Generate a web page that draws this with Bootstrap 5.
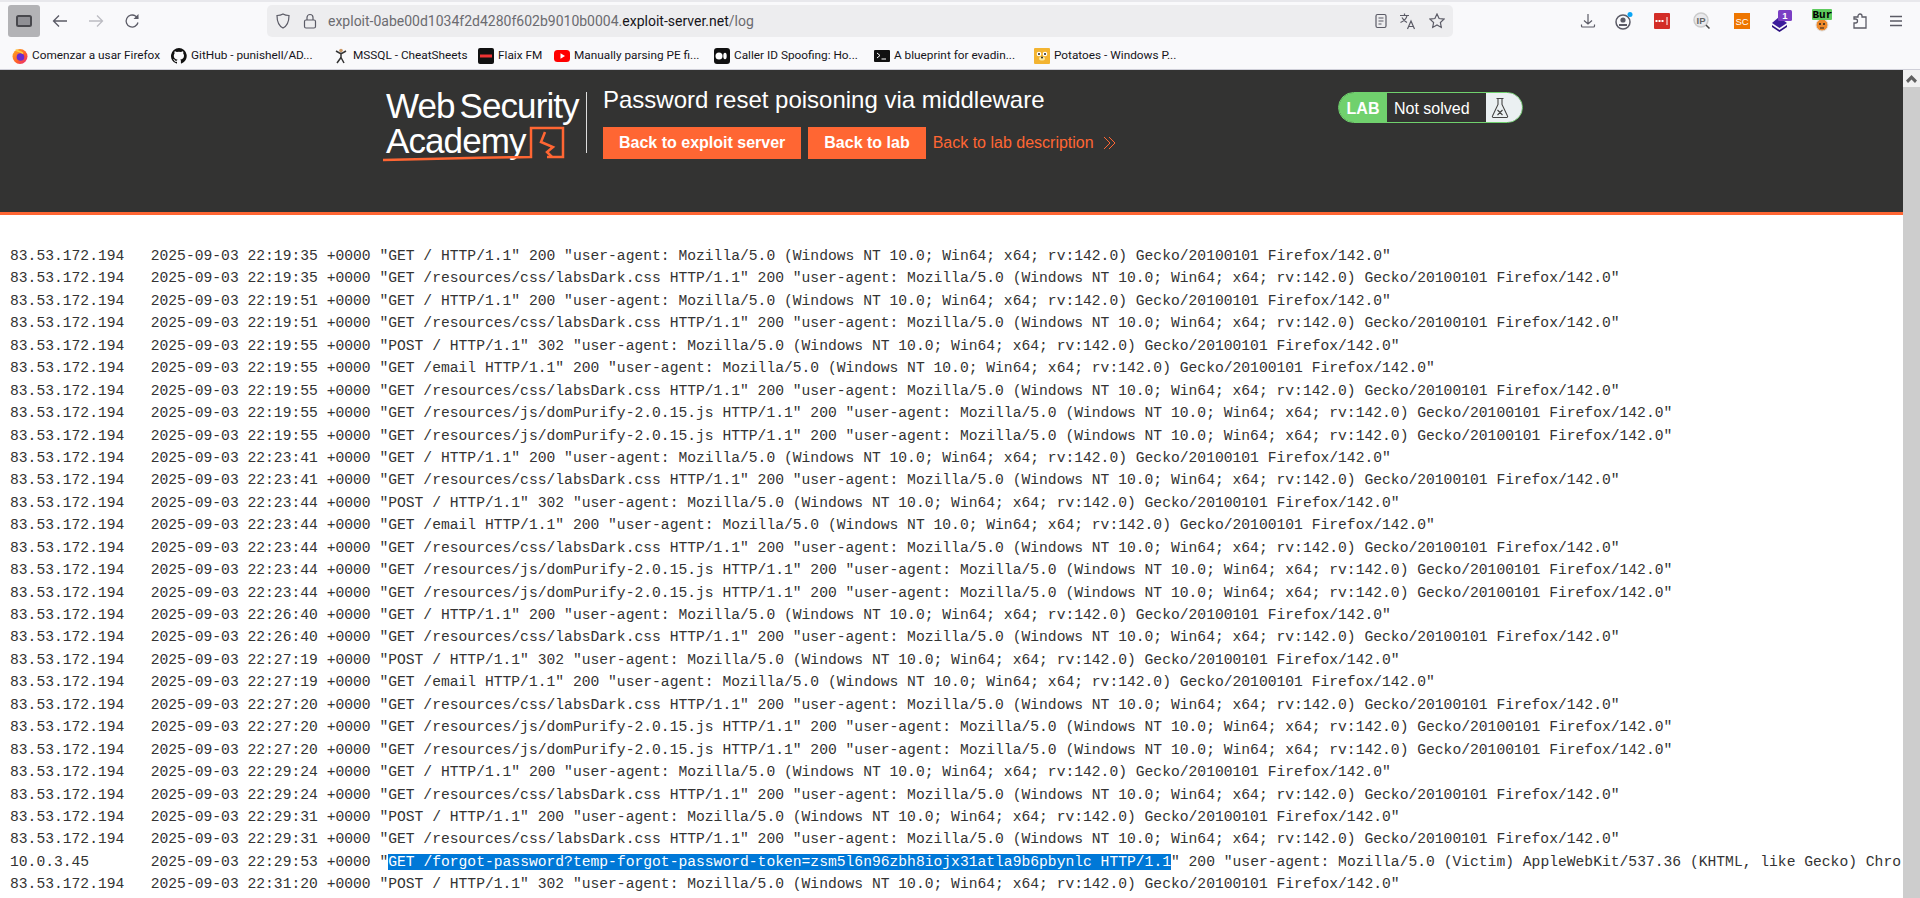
<!DOCTYPE html>
<html lang="en"><head><meta charset="utf-8"><title>log</title>
<link href="https://cdn.jsdelivr.net/npm/bootstrap@5.3.0/dist/css/bootstrap.min.css" rel="stylesheet">
<style>
html,body{height:898px;overflow:hidden;background:#fff}
body{font-family:"Liberation Sans",Arial,sans-serif;color:#222}
.chrome{background:#f9f9fb;height:70px;border-top:2px solid #e8e8ec;border-bottom:1px solid #cfcfd8}
.bar-a{height:35px;padding:3px 6px 0 8px}
.sidebtn{width:32px;height:32px;background:#b3b3b6;border-radius:3px}
.navic{width:36px}
.navfirst{margin-left:2px}
.urlbox{width:1186px;height:32px;margin-left:117px;background:#ededef;border-radius:5px;padding:0 8px;font-family:Roboto,sans-serif;font-size:14px}
.urlbox .dim{color:#6b6b70}
.urlbox .dk{color:#15141a}
.gap-lock{margin-left:11px}
.gap-url{margin-left:10px}
.gap-tr{margin-right:10px}
.gap-st{margin-right:12px}
.slot{width:40px;display:flex;justify-content:center}
.slotn{width:36px;display:flex;justify-content:center}
.bar-b{height:27px;margin-top:5px;font-family:Roboto,sans-serif;font-size:11.8px;color:#15141a;padding-left:12px;white-space:nowrap}
.bmk{display:flex;align-items:center;gap:4px;flex:none}
.bk-a{width:159px}.bk-b{width:162px}.bk-c{width:145px}.bk-d{width:76px}.bk-e{width:160px}
.ic{flex:none;display:block}
.main{height:828px}
.colpage{width:1903px;overflow:hidden}
.scrollz{width:17px;background:#cdcdcd}
.scrolltop{height:17px;background:#f1f1f1;display:flex;align-items:center;justify-content:center}
.acad{background:#333332;height:145px;border-bottom:3px solid #ff6633;position:relative}
.acadin{padding-left:386px;padding-top:15px}
.logowrap{width:200px;color:#fff;position:relative;padding-top:3px}
.lgt{font-size:35px;line-height:35px;letter-spacing:-.9px;word-spacing:-4px;white-space:nowrap}
.logomark{position:absolute;left:-5px;top:35px}
.vline{width:1px;height:61px;background:#ddd;margin:7px 16px 0 0}
.ttl{font-size:24px;color:#fff;line-height:29px;margin-bottom:13px;white-space:nowrap}
.orgbtn{background:#ff6633;color:#fff;font-weight:700;font-size:16px;height:32px;padding:0 16px;line-height:32px;margin-right:7px;white-space:nowrap}
.orglink{color:#ff6633;font-size:16px;white-space:nowrap}
.pill{position:absolute;left:1338px;top:22px;width:185px;height:31px;border-radius:16px;border:1px solid #70d16d;display:flex;overflow:hidden;font-size:16px;color:#fff}
.pl{background:#70d16d;width:48px;font-weight:700;text-align:center;line-height:31px}
.pm{width:99px;padding-left:7px;line-height:31px}
.pr{flex:1;background:#ebf0f2;display:flex;align-items:center;padding-left:5px}
.logbox{padding:30px 0 0 10px;font-family:"Liberation Mono",monospace;font-size:14.67px;line-height:22.43px;color:#333}
.logln{white-space:pre}
.sel{background:#0078d7;color:#fff}
</style></head><body>
<div class="chrome">
 <div class="bar-a d-flex align-items-center">
  <div class="sidebtn d-flex align-items-center justify-content-center"><svg class="ic" width="16" height="12" viewBox="0 0 16 12"><rect x="1" y="1" width="14" height="10" rx="1.5" fill="#8f8f94" stroke="#48484d" stroke-width="2"/></svg></div>
  <div class="navic navfirst d-flex justify-content-center"><svg class="ic" width="16" height="16" viewBox="0 0 16 16" fill="none" stroke="#5b5b66" stroke-width="1.3"><path d="M15 8H1.500M7 2.500 1.500 8 7 13.500"/></svg></div>
  <div class="navic d-flex justify-content-center"><svg class="ic" width="16" height="16" viewBox="0 0 16 16" fill="none" stroke="#bcbcc2" stroke-width="1.3"><path d="M1 8h13.500M9 2.500 14.500 8 9 13.500"/></svg></div>
  <div class="navic d-flex justify-content-center"><svg class="ic" width="16" height="16" viewBox="0 0 16 16" fill="none" stroke="#5b5b66" stroke-width="1.3"><path d="M14 9.500A6 6 0 1 1 11.500 3L14 5.500"/><path d="M14.500 1v5h-5z" fill="#5b5b66" stroke="none"/></svg></div>
  <div class="urlbox d-flex align-items-center">
   <svg class="ic" width="16" height="16" viewBox="0 0 16 16" fill="none" stroke="#5b5b66" stroke-width="1.2"><path d="M8 1c2 1.200 3.800 1.500 6 1.500 0 5.500-1 10-6 12.500C3 12.500 2 8 2 2.500 4.200 2.500 6 2.200 8 1z"/></svg>
   <svg class="ic gap-lock" width="16" height="16" viewBox="0 0 16 16" fill="none" stroke="#5b5b66" stroke-width="1.2"><rect x="2.500" y="7" width="11" height="8" rx="1.500"/><path d="M5 7V4.500a3 3 0 0 1 6 0V7"/></svg>
   <span class="gap-url"><span class="dim">exploit-0abe00d1034f2d4280f602b9010b0004.</span><span class="dk">exploit-server.net</span><span class="dim">/log</span></span>
   <div class="ms-auto d-flex align-items-center">
    <svg class="ic gap-tr" width="16" height="16" viewBox="0 0 16 16" fill="none" stroke="#5b5b66" stroke-width="1.200"><rect x="3" y="1.500" width="10" height="13" rx="1.500"/><path d="M5.500 5h5M5.500 8h5M5.500 11h3"/></svg>
    <svg class="ic gap-st" width="18" height="18" viewBox="0 0 18 18" fill="none" stroke="#5b5b66" stroke-width="1.200"><path d="M1 3.500h9M5.500 1.500v2M8 3.500c-.5 3-3 5.500-6.500 7M3 5.500c1 2 3 4 5 5M8.500 17l3.500-8 3.500 8M9.700 14.500h4.600"/></svg>
    <svg class="ic" width="16" height="16" viewBox="0 0 16 16" fill="none" stroke="#5b5b66" stroke-width="1.200"><path d="m8 1 2.100 4.500 4.900.6-3.600 3.400.9 4.900L8 12l-4.300 2.400.9-4.900L1 6.100l4.900-.6z"/></svg>
   </div>
  </div>
  <div class="ms-auto d-flex align-items-center">
    <div class="slotn"><svg class="ic" width="16" height="16" viewBox="0 0 16 16" fill="none" stroke="#5b5b66" stroke-width="1.200"><path d="M8 1v10M4 7.500 8 11l4-3.500M1.500 11.500V13a1 1 0 0 0 1 1h11a1 1 0 0 0 1-1v-1.500"/></svg></div>
    <div class="slotn"><svg class="ic" width="20" height="20" viewBox="0 0 20 20"><circle cx="9" cy="11" r="7" fill="#f9f9fb" stroke="#5b5b66" stroke-width="1.500"/><circle cx="9" cy="9" r="2.600" fill="#5b5b66"/><path d="M5 13h8v2H5z" fill="#5b5b66"/><circle cx="16" cy="3.500" r="2.500" fill="#0aa5f5"/></svg></div>
    <div class="slot"><svg class="ic" width="16" height="16" viewBox="0 0 16 16"><rect width="16" height="16" rx="1" fill="#d32d27"/><path d="M1.500 7h2v2h-2zM4.500 7h2v2h-2zM7.500 7h2v2h-2zM12.500 4h1v8h-1z" fill="#fff"/></svg></div>
    <div class="slot"><svg class="ic" width="18" height="18" viewBox="0 0 18 18"><circle cx="8" cy="8" r="7" fill="#e9e9ec" stroke="#ccc" stroke-width="1.500"/><text x="8" y="11.500" font-size="9.500" font-weight="700" text-anchor="middle" fill="#666" font-family="Liberation Sans">IP</text><path d="m13 13 3.500 3.500" stroke="#444" stroke-width="1.500"/></svg></div>
    <div class="slot"><svg class="ic" width="16" height="16" viewBox="0 0 16 16"><rect width="16" height="16" fill="#ee7600"/><text x="8" y="11.500" font-size="9.500" text-anchor="middle" fill="#fff" font-family="Liberation Sans">SC</text></svg></div>
    <div class="slot"><svg class="ic" width="20" height="22" viewBox="0 0 20 22"><path d="M0 13l7-6 8 6-7.500 5z" fill="#3c1c9c"/><path d="M0 15l7.500 5L15 15v2l-7.500 5L0 17z" fill="#2c1080"/><rect x="6" y="0" width="14" height="11" rx="1.500" fill="#7b3fc4"/><text x="13" y="9" font-size="9.500" font-weight="700" text-anchor="middle" fill="#fff" font-family="Liberation Sans">1</text></svg></div>
    <div class="slot"><svg class="ic" width="20" height="24" viewBox="0 0 20 24"><circle cx="10" cy="16" r="6" fill="#ef8a2c" stroke="#ddd"/><circle cx="8" cy="15" r="1" fill="#222"/><circle cx="12" cy="15" r="1" fill="#222"/><path d="M8 19h4" stroke="#222"/><rect x="0" y="0" width="20" height="11" rx="1" fill="#5ecb5e"/><text x="0.500" y="9" font-size="11" font-weight="700" font-family="Liberation Mono" fill="#000">Bur</text></svg></div>
    <div class="slotn"><svg class="ic" width="16" height="16" viewBox="0 0 16 16" fill="none" stroke="#5b5b66" stroke-width="1.300"><path d="M2 15V10h1.500a2 2 0 0 0 0-4H2V4h4V3a2 2 0 0 1 4 0v1h4v11z"/></svg></div>
    <div class="slotn"><svg class="ic" width="16" height="16" viewBox="0 0 16 16" fill="none" stroke="#5b5b66" stroke-width="1.300"><path d="M2 3.500h12M2 8h12M2 12.500h12"/></svg></div>
  </div>
 </div>
 <div class="bar-b d-flex align-items-center">
  <span class="bmk bk-a"><svg class="ic" width="16" height="16" viewBox="0 0 16 16"><defs><linearGradient id="ff" x1="0" y1="0" x2="1" y2="1"><stop offset="0" stop-color="#ffb21f"/><stop offset=".6" stop-color="#ff5a2c"/><stop offset="1" stop-color="#e1208a"/></linearGradient></defs><circle cx="8" cy="8.500" r="7.500" fill="url(#ff)"/><circle cx="8.500" cy="9" r="3.800" fill="#6a2bd0"/><path d="M4 1.500c.5 2.500 5 1.500 7 4" stroke="#ffd03c" stroke-width="1.500" fill="none"/></svg>Comenzar a usar Firefox</span>
  <span class="bmk bk-b"><svg class="ic" width="16" height="16" viewBox="0 0 16 16"><path fill="#111" d="M8 0a8 8 0 0 0-2.500 15.600c.4.100.5-.2.500-.4v-1.400c-2.200.5-2.700-1-2.700-1-.4-.9-.9-1.200-.9-1.200-.7-.5.100-.5.100-.5.800.1 1.200.8 1.200.8.700 1.200 1.900.9 2.300.7.100-.5.300-.9.500-1.100-1.800-.2-3.700-.9-3.700-4 0-.9.300-1.600.8-2.100-.1-.2-.4-1 .1-2.100 0 0 .7-.2 2.200.8a7.600 7.600 0 0 1 4 0c1.500-1 2.200-.8 2.200-.8.400 1.100.2 1.900.1 2.100.5.600.8 1.300.8 2.100 0 3.100-1.900 3.700-3.700 3.900.3.300.6.800.6 1.500v2.200c0 .2.100.5.600.4A8 8 0 0 0 8 0z"/></svg>GitHub - punishell/AD...</span>
  <span class="bmk bk-c"><svg class="ic" width="16" height="16" viewBox="0 0 16 16" fill="none" stroke="#333" stroke-width="1.500"><circle cx="8" cy="2.500" r="1.800" fill="#c96" stroke="none"/><path d="M8 4.500v5M3 3l5 3 5-3M8 9.500l-4 5.500M8 9.500l3 5.500"/></svg>MSSQL - CheatSheets</span>
  <span class="bmk bk-d"><svg class="ic" width="16" height="16" viewBox="0 0 16 16"><rect width="16" height="16" rx="2" fill="#111"/><rect x="2" y="6.500" width="12" height="3" fill="#e33"/></svg>Flaix FM</span>
  <span class="bmk bk-e"><svg class="ic" width="16" height="16" viewBox="0 0 16 16"><rect y="2" width="16" height="12" rx="3.500" fill="#f00"/><path d="M6.500 5.200v5.600L11 8z" fill="#fff"/></svg>Manually parsing PE fi...</span>
  <span class="bmk bk-e"><svg class="ic" width="16" height="16" viewBox="0 0 16 16"><rect width="16" height="16" rx="3" fill="#111"/><circle cx="5" cy="8" r="3.500" fill="#fff"/><ellipse cx="11" cy="8" rx="1.700" ry="3.300" fill="#fff"/></svg>Caller ID Spoofing: Ho...</span>
  <span class="bmk bk-e"><svg class="ic" width="16" height="16" viewBox="0 0 16 16"><rect y="2" width="16" height="12" rx="1" fill="#111"/><path d="m3 5 3 2.500L3 10M7.500 11H12" stroke="#fff" fill="none"/></svg>A blueprint for evadin...</span>
  <span class="bmk"><svg class="ic" width="16" height="16" viewBox="0 0 16 16"><rect width="16" height="16" rx="1" fill="#f3b431"/><circle cx="5" cy="6" r="2.300" fill="#fff"/><circle cx="11" cy="6" r="2.300" fill="#fff"/><circle cx="5" cy="6" r="1" fill="#222"/><circle cx="11" cy="6" r="1" fill="#222"/><ellipse cx="8" cy="10.500" rx="3" ry="2" fill="#fbe8a0"/><circle cx="8" cy="9.500" r="1" fill="#222"/></svg>Potatoes - Windows P...</span>
 </div>
</div>
<div class="main d-flex">
 <div class="colpage">
  <div class="acad">
   <div class="acadin d-flex">
    <div class="logowrap"><div class="lgt">Web Security</div><div class="lgt">Academy</div>
     <svg class="logomark" width="190" height="44" viewBox="0 0 190 44" fill="none" stroke="#ff6633" stroke-width="2.500"><path d="M2 40Q80 38 150 37V8H182V37H166"/><path d="M164 12l-4 10 12 5-6 5 5 5"/></svg>
    </div>
    <div class="vline"></div>
    <div>
     <div class="ttl">Password reset poisoning via middleware</div>
     <div class="d-flex align-items-center"><span class="orgbtn">Back to exploit server</span><span class="orgbtn">Back to lab</span><span class="orglink">Back to lab description</span><svg class="ic ms-2" width="14" height="14" viewBox="0 0 14 14" fill="none" stroke="#ff6633" stroke-width="1"><path d="m2 1 6 6-6 6M7 1l6 6-6 6"/></svg></div>
    </div>
   </div>
   <div class="pill"><div class="pl">LAB</div><div class="pm">Not solved</div><div class="pr"><svg class="ic" width="18" height="22" viewBox="0 0 18 22" fill="none" stroke="#444" stroke-width="1.100"><path d="M5.500 1.500h7M7 1.500v6L1.500 19a1 1 0 0 0 1 1.500h13a1 1 0 0 0 1-1.500L11 7.500v-6M6.500 13l5 5M11.500 13l-5 5"/></svg></div></div>
  </div>
  <div class="logbox" id="log"></div>
 </div>
 <div class="scrollz"><div class="scrolltop"><svg class="ic" width="11" height="8" viewBox="0 0 11 8"><path d="M5.500 0 11 5.500 9 8 5.500 4.500 2 8 0 5.500z" fill="#606060"/></svg></div></div>
</div>
<script>
var p='"user-agent: Mozilla/5.0 (Windows NT 10.0; Win64; x64; rv:142.0) Gecko/20100101 Firefox/142.0"';
var ip='83.53.172.194   ';
var R=[['22:19:35','GET / HTTP/1.1','200'],['22:19:35','GET /resources/css/labsDark.css HTTP/1.1','200'],['22:19:51','GET / HTTP/1.1','200'],['22:19:51','GET /resources/css/labsDark.css HTTP/1.1','200'],['22:19:55','POST / HTTP/1.1','302'],['22:19:55','GET /email HTTP/1.1','200'],['22:19:55','GET /resources/css/labsDark.css HTTP/1.1','200'],['22:19:55','GET /resources/js/domPurify-2.0.15.js HTTP/1.1','200'],['22:19:55','GET /resources/js/domPurify-2.0.15.js HTTP/1.1','200'],['22:23:41','GET / HTTP/1.1','200'],['22:23:41','GET /resources/css/labsDark.css HTTP/1.1','200'],['22:23:44','POST / HTTP/1.1','302'],['22:23:44','GET /email HTTP/1.1','200'],['22:23:44','GET /resources/css/labsDark.css HTTP/1.1','200'],['22:23:44','GET /resources/js/domPurify-2.0.15.js HTTP/1.1','200'],['22:23:44','GET /resources/js/domPurify-2.0.15.js HTTP/1.1','200'],['22:26:40','GET / HTTP/1.1','200'],['22:26:40','GET /resources/css/labsDark.css HTTP/1.1','200'],['22:27:19','POST / HTTP/1.1','302'],['22:27:19','GET /email HTTP/1.1','200'],['22:27:20','GET /resources/css/labsDark.css HTTP/1.1','200'],['22:27:20','GET /resources/js/domPurify-2.0.15.js HTTP/1.1','200'],['22:27:20','GET /resources/js/domPurify-2.0.15.js HTTP/1.1','200'],['22:29:24','GET / HTTP/1.1','200'],['22:29:24','GET /resources/css/labsDark.css HTTP/1.1','200'],['22:29:31','POST / HTTP/1.1','200'],['22:29:31','GET /resources/css/labsDark.css HTTP/1.1','200']];
var o=R.map(function(r){return ip+'2025-09-03 '+r[0]+' +0000 "'+r[1]+'" '+r[2]+' '+p;});
o.push('10.0.3.45       2025-09-03 22:29:53 +0000 "<span class="sel">GET /forgot-password?temp-forgot-password-token=zsm5l6n96zbh8iojx31atla9b6pbynlc HTTP/1.1</span>" 200 "user-agent: Mozilla/5.0 (Victim) AppleWebKit/537.36 (KHTML, like Gecko) Chro');
o.push(ip+'2025-09-03 22:31:20 +0000 "POST / HTTP/1.1" 302 '+p);
document.getElementById('log').innerHTML=o.map(function(l){return '<div class="logln">'+l+'</div>';}).join('');
</script>
<script src="https://cdn.jsdelivr.net/npm/bootstrap@5.3.0/dist/js/bootstrap.bundle.min.js"></script>
</body></html>
